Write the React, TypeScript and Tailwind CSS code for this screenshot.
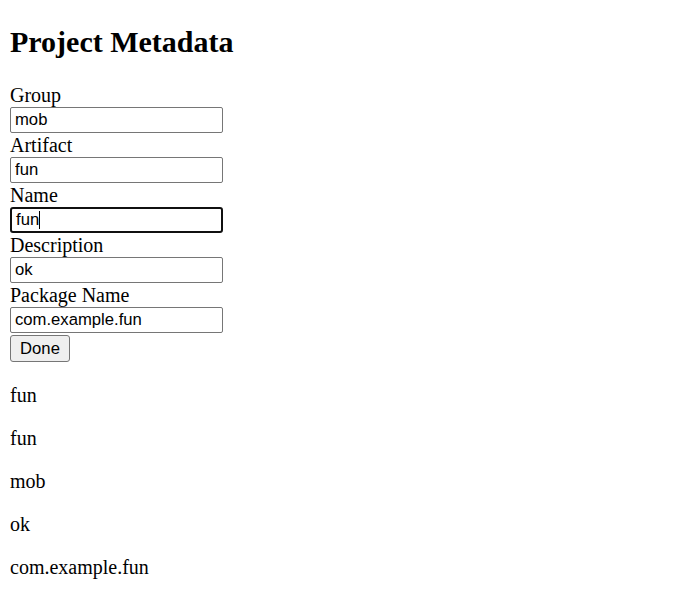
import {useState} from "react";

const FIELDS = [
    {label: "Group", value: "mob"},
    {label: "Artifact", value: "fun"},
    {label: "Name", value: "fun", focused: true},
    {label: "Description", value: "ok"},
    {label: "Package Name", value: "com.example.fun"},
];

const inputBase =
    "block w-[213px] h-[26px] px-[4px] text-[16.67px] leading-[20px] text-black bg-white font-['Liberation_Sans',Arial,sans-serif] rounded-[2px]";

const App = () => {
    const [values] = useState(FIELDS.map(f => f.value));

    return (
        <div className="min-h-screen bg-white px-[10px] pb-[10px] text-black font-['Liberation_Serif','Times_New_Roman',serif] text-[20px]">
            <h2 className="pt-[25px] mb-[25px] text-[30px] leading-[34px] font-bold">Project Metadata</h2>

            {/* Form */}
            <div className="pb-[2px]">
                {FIELDS.map((field, i) => (
                    <div key={field.label}>
                        <div className="leading-[23px]">{field.label}</div>
                        <div className="h-[27px]">
                            {field.focused ? (
                                <div className={`${inputBase} border-2 border-[#101010] rounded-[3px] flex items-center px-[3px]`}>
                                    <span>{values[i]}</span>
                                    <span className="inline-block w-px h-[18px] bg-black"/>
                                </div>
                            ) : (
                                <input
                                    readOnly
                                    value={values[i]}
                                    className={`${inputBase} border border-[#767676] outline-none`}
                                />
                            )}
                        </div>
                    </div>
                ))}
                <button
                    className="block mt-px w-[60px] h-[27px] bg-[#efefef] border border-[#767676] rounded-[3px] text-[16.67px] text-black font-['Liberation_Sans',Arial,sans-serif]">
                    Done
                </button>
            </div>

            {/* Summary */}
            <div>
                {[values[1], values[2], values[0], values[3], values[4]].map((v, i) => (
                    <p key={i} className="my-[20px] leading-[23px]">{v}</p>
                ))}
            </div>
        </div>
    );
};

export default App;
